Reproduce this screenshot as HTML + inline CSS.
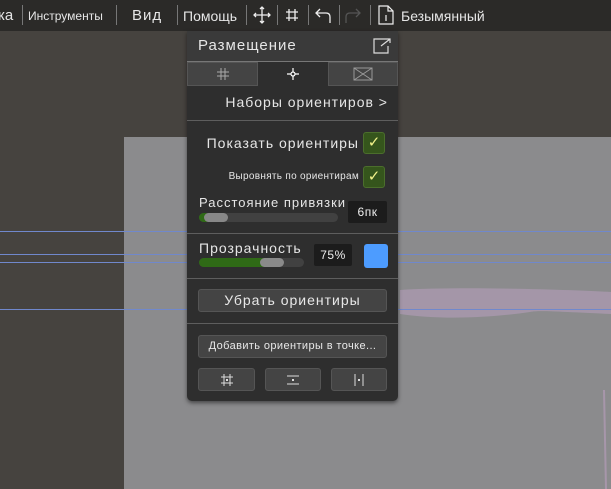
<!DOCTYPE html>
<html><head><meta charset="utf-8"><style>
*{margin:0;padding:0;box-sizing:border-box}
body{width:611px;height:489px;overflow:hidden;background:#46433f;font-family:"Liberation Sans","DejaVu Sans",sans-serif;position:relative;color:#e6e6e6}
.tb{position:absolute;left:0;top:0;width:611px;height:31px;background:#2b2a28;font-size:13px}
.tb span{position:absolute;top:8px;white-space:nowrap}
.sep{position:absolute;top:5px;width:1px;height:20px;background:#777}
.canvas{position:absolute;left:124px;top:137px;width:487px;height:352px;background:#8b8b8d}
.g{position:absolute;left:0;width:611px;height:1px;background:#7088cc}
.panel{position:absolute;left:187px;top:31px;width:211px;height:370px;background:#2e2e2e;border-radius:0 0 5px 5px;box-shadow:0 2px 4px rgba(0,0,0,.5)}
.panel div{white-space:nowrap}
.abs{position:absolute}
.chk{position:absolute;width:22px;height:22px;background:#35551c;border:1px solid #4b6e2c;border-radius:3px;color:#f2f28a;font-size:15px;text-align:center;line-height:20px;font-weight:bold}
.hr{position:absolute;left:0;width:211px;height:1px;background:#5e5e5e}
.btn{position:absolute;background:#444;border:1px solid #555;border-radius:3px;text-align:center;color:#e8e8e8}
.box{position:absolute;background:#1c1c1c;border-radius:2px;font-size:12px;text-align:center;color:#eee;letter-spacing:.5px}
.ls{letter-spacing:1px}
</style></head><body>
<div class="tb">
<span style="left:-2px;font-size:15px;top:7px">ка</span><div class="sep" style="left:22px"></div>
<span style="left:28px;font-size:12px;top:9px">Инструменты</span><div class="sep" style="left:116px"></div>
<span style="left:132px;font-size:15px;top:7px;letter-spacing:1px">Вид</span><div class="sep" style="left:177px"></div>
<span style="left:183px;font-size:14px;top:8px">Помощь</span><div class="sep" style="left:246px"></div>
<svg class="abs" style="left:252px;top:5px" width="20" height="20" viewBox="0 0 20 20" stroke="#eee" fill="none" stroke-width="1.3"><path d="M10 2V18M2 10H18M8 4L10 2L12 4M8 16L10 18L12 16M4 8L2 10L4 12M16 8L18 10L16 12"/></svg>
<div class="sep" style="left:277px"></div>
<svg class="abs" style="left:284px;top:7px" width="16" height="16" viewBox="0 0 16 16" stroke="#eee" stroke-width="1.3"><path d="M5 2V14M11 2V14M2 5H14M2 11H14"/></svg>
<div class="sep" style="left:308px"></div>
<svg class="abs" style="left:314px;top:6px" width="18" height="18" viewBox="0 0 18 18" stroke="#eee" fill="none" stroke-width="1.3"><path d="M6 3L2 7L6 11M2 7H12Q16 7 16 11V17"/></svg>
<div class="sep" style="left:339px"></div>
<svg class="abs" style="left:344px;top:6px" width="18" height="18" viewBox="0 0 18 18" stroke="#555" fill="none" stroke-width="1.3"><path d="M12 3L16 7L12 11M16 7H6Q2 7 2 11V17"/></svg>
<div class="sep" style="left:370px"></div>
<svg class="abs" style="left:378px;top:5px" width="16" height="20" viewBox="0 0 16 20" stroke="#eee" fill="none" stroke-width="1.2"><path d="M1 1H10L15 6V19H1Z M10 1V6H15 M8 10V16"/></svg>
<span style="left:401px;font-size:14px;top:8px">Безымянный</span>
</div>
<div class="canvas"></div>
<svg class="abs" style="left:380px;top:280px" width="231" height="209"><path d="M20 10 C80 6 200 10 231 12 L231 34 C180 32 160 30 150 32 C110 38 60 40 20 34Z" fill="#a898ad" opacity=".85"/><path d="M224 110 L226 209" stroke="#a796aa" stroke-width="2"/></svg>
<div class="g" style="top:231px"></div><div class="g" style="top:254px"></div><div class="g" style="top:262px"></div><div class="g" style="top:309px"></div>
<div class="panel">
<div class="abs" style="left:0;top:0;width:211px;height:30px;background:#3a3a3a"></div>
<div class="abs" style="left:11px;top:6px;font-size:15px;letter-spacing:1px">Размещение</div>
<svg class="abs" style="left:186px;top:7px" width="18" height="16" viewBox="0 0 18 16" stroke="#ddd" fill="none" stroke-width="1.2"><path d="M12 1H1V15H15V8M8 8L17 1M12 1H17V5"/></svg>
<div class="abs" style="left:0;top:30px;width:211px;height:1px;background:#777"></div>
<div class="abs" style="left:0;top:31px;width:71px;height:24px;background:#444;border:1px solid #555"></div>
<div class="abs" style="left:71px;top:31px;width:70px;height:24px;background:#2e2e2e"></div>
<div class="abs" style="left:141px;top:31px;width:70px;height:24px;background:#444;border:1px solid #555"></div>
<svg class="abs" style="left:29px;top:36px" width="14" height="14" stroke="#aaa" stroke-width="1"><path d="M5 1V13M9 1V13M1 5H13M1 9H13"/></svg>
<svg class="abs" style="left:99px;top:36px" width="14" height="14" stroke="#fff" stroke-width="1.2" fill="none"><path d="M7 1V13M1 7H13"/><circle cx="7" cy="7" r="2" fill="#2e2e2e"/></svg>
<svg class="abs" style="left:166px;top:36px" width="20" height="14" stroke="#999" stroke-width="1" fill="none"><path d="M1 1H19V13H1Z M1 1L19 13M19 1L1 13"/></svg>
<div class="abs ls" style="right:10px;top:63px;font-size:14px">Наборы ориентиров &gt;</div>
<div class="hr" style="top:89px"></div>
<div class="abs ls" style="right:39px;top:104px;font-size:14px">Показать ориентиры</div>
<div class="chk" style="left:176px;top:101px">✓</div>
<div class="abs" style="right:39px;top:140px;font-size:10px;letter-spacing:.3px">Выровнять по ориентирам</div>
<div class="chk" style="left:176px;top:135px">✓</div>
<div class="abs ls" style="left:12px;top:164px;font-size:13px">Расстояние привязки</div>
<div class="abs" style="left:12px;top:182px;width:139px;height:9px;background:#414141;border-radius:5px"></div>
<div class="abs" style="left:12px;top:182px;width:8px;height:9px;background:#2f6a16;border-radius:5px 0 0 5px"></div>
<div class="abs" style="left:17px;top:182px;width:24px;height:9px;background:#888;border-radius:5px"></div>
<div class="box" style="left:161px;top:170px;width:39px;height:22px;line-height:22px">6пк</div>
<div class="hr" style="top:202px"></div>
<div class="abs ls" style="left:12px;top:209px;font-size:14px">Прозрачность</div>
<div class="abs" style="left:12px;top:227px;width:105px;height:9px;background:#414141;border-radius:5px"></div>
<div class="abs" style="left:12px;top:227px;width:70px;height:9px;background:#2f6a16;border-radius:5px 0 0 5px"></div>
<div class="abs" style="left:73px;top:227px;width:24px;height:9px;background:#8a8a8a;border-radius:5px"></div>
<div class="box" style="left:127px;top:213px;width:38px;height:22px;line-height:22px">75%</div>
<div class="abs" style="left:177px;top:213px;width:24px;height:24px;background:#4d9cff;border-radius:3px"></div>
<div class="hr" style="top:247px"></div>
<div class="btn ls" style="left:11px;top:258px;width:189px;height:23px;line-height:21px;font-size:14px">Убрать ориентиры</div>
<div class="hr" style="top:292px"></div>
<div class="btn" style="left:11px;top:304px;width:189px;height:23px;line-height:21px;font-size:11px;letter-spacing:.4px">Добавить ориентиры в точке...</div>
<div class="btn" style="left:11px;top:337px;width:57px;height:23px"></div>
<div class="btn" style="left:78px;top:337px;width:56px;height:23px"></div>
<div class="btn" style="left:144px;top:337px;width:56px;height:23px"></div>
<svg class="abs" style="left:33px;top:342px" width="14" height="14" stroke="#ddd" stroke-width="1"><path d="M4 1V13M10 1V13M1 4H13M1 10H13"/><rect x="6" y="6" width="2" height="2" fill="#ddd" stroke="none"/></svg>
<svg class="abs" style="left:99px;top:342px" width="14" height="14" stroke="#ddd" stroke-width="1"><path d="M1 3H13M1 11H13"/><rect x="6" y="6" width="2" height="2" fill="#ddd" stroke="none"/></svg>
<svg class="abs" style="left:165px;top:342px" width="14" height="14" stroke="#ddd" stroke-width="1"><path d="M3 1V13M11 1V13"/><rect x="6" y="6" width="2" height="2" fill="#ddd" stroke="none"/></svg>
</div>
</body></html>
